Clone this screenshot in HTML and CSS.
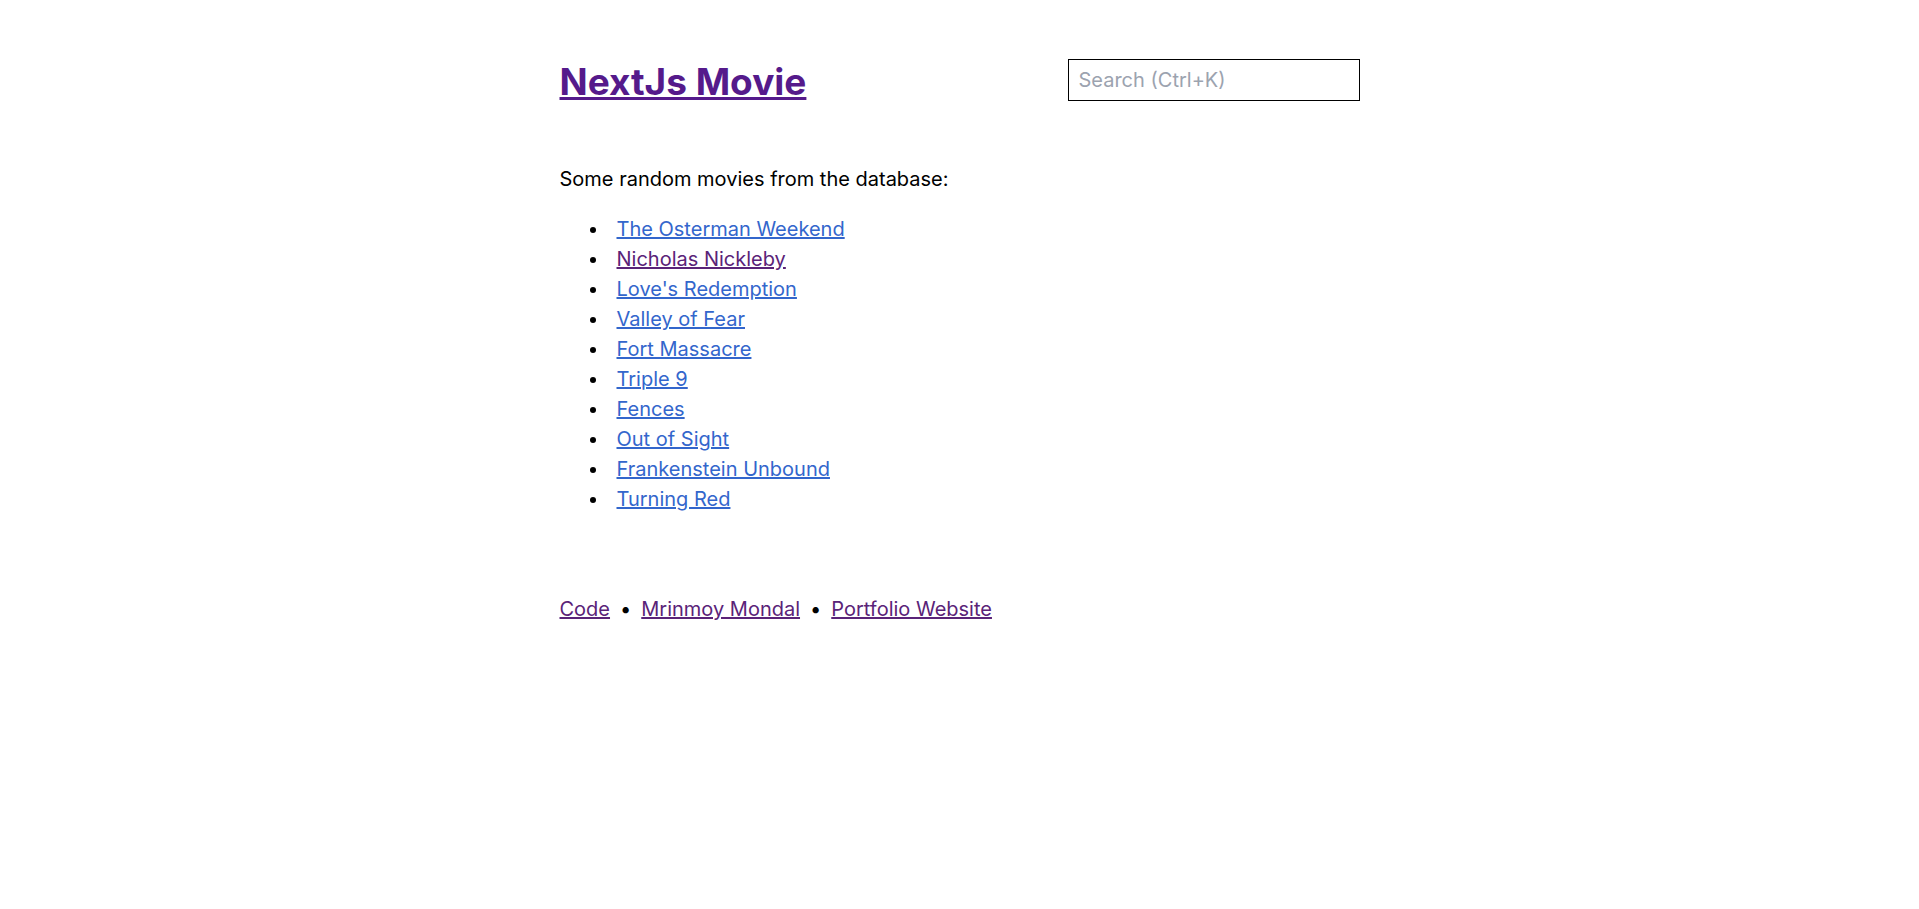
FILE: index.html
```html
<!DOCTYPE html>
<html lang="en">
<head>
<meta charset="utf-8">
<title>NextJs Movie</title>
<link rel="stylesheet" href="styles.css">
</head>
<body>
<div class="page">
  <header class="header">
    <h1 class="title"><a class="link visited" href="#home">NextJs Movie</a></h1>
    <input class="search" type="text" aria-label="Search" placeholder="Search (Ctrl+K)">
  </header>
  <main class="main">
    <p class="intro">Some random movies from the database:</p>
    <ul class="movies">
      <li class="movie"><a class="link" href="#m1">The Osterman Weekend</a></li>
      <li class="movie"><a class="link visited" href="#m2">Nicholas Nickleby</a></li>
      <li class="movie"><a class="link" href="#m3">Love's Redemption</a></li>
      <li class="movie"><a class="link" href="#m4">Valley of Fear</a></li>
      <li class="movie"><a class="link" href="#m5">Fort Massacre</a></li>
      <li class="movie"><a class="link" href="#m6">Triple 9</a></li>
      <li class="movie"><a class="link" href="#m7">Fences</a></li>
      <li class="movie"><a class="link" href="#m8">Out of Sight</a></li>
      <li class="movie"><a class="link" href="#m9">Frankenstein Unbound</a></li>
      <li class="movie"><a class="link" href="#m10">Turning Red</a></li>
    </ul>
  </main>
  <footer class="footer">
    <a class="link visited" href="#code">Code</a>
    <span>•</span>
    <a class="link visited" href="#author">Mrinmoy Mondal</a>
    <span>•</span>
    <a class="link visited" href="#portfolio">Portfolio Website</a>
  </footer>
</div>
</body>
</html>
```
FILE: styles.css
```css
body {
  margin: 0;
  background: #fff;
  color: #000;
  font-family: Inter, sans-serif;
  font-size: 20px;
  font-weight: 400;
  line-height: 30px;
}

.page {
  max-width: 800px;
  margin: 0 auto;
  padding: 59px 20px;
}

.header {
  display: flex;
  justify-content: space-between;
  align-items: flex-start;
}

.title {
  margin: 0;
  font-size: 37px;
  font-weight: 700;
  line-height: 46px;
}

.link {
  color: #3366cc;
}

.link.visited {
  color: #551a8b;
}

.movie .visited,
.footer .visited {
  color: #5a2378;
}

.search {
  box-sizing: border-box;
  width: 292px;
  height: 42px;
  padding: 0 10px;
  border: 1px solid #000;
  font: inherit;
}

.search::placeholder {
  color: #9ca3af;
}

.intro {
  margin: 59px 0 20px;
}

.movies {
  margin: 0;
  padding-left: 49px;
}

.movie {
  padding-left: 8px;
}

.footer {
  display: flex;
  gap: 10px;
  margin-top: 80px;
}
```
